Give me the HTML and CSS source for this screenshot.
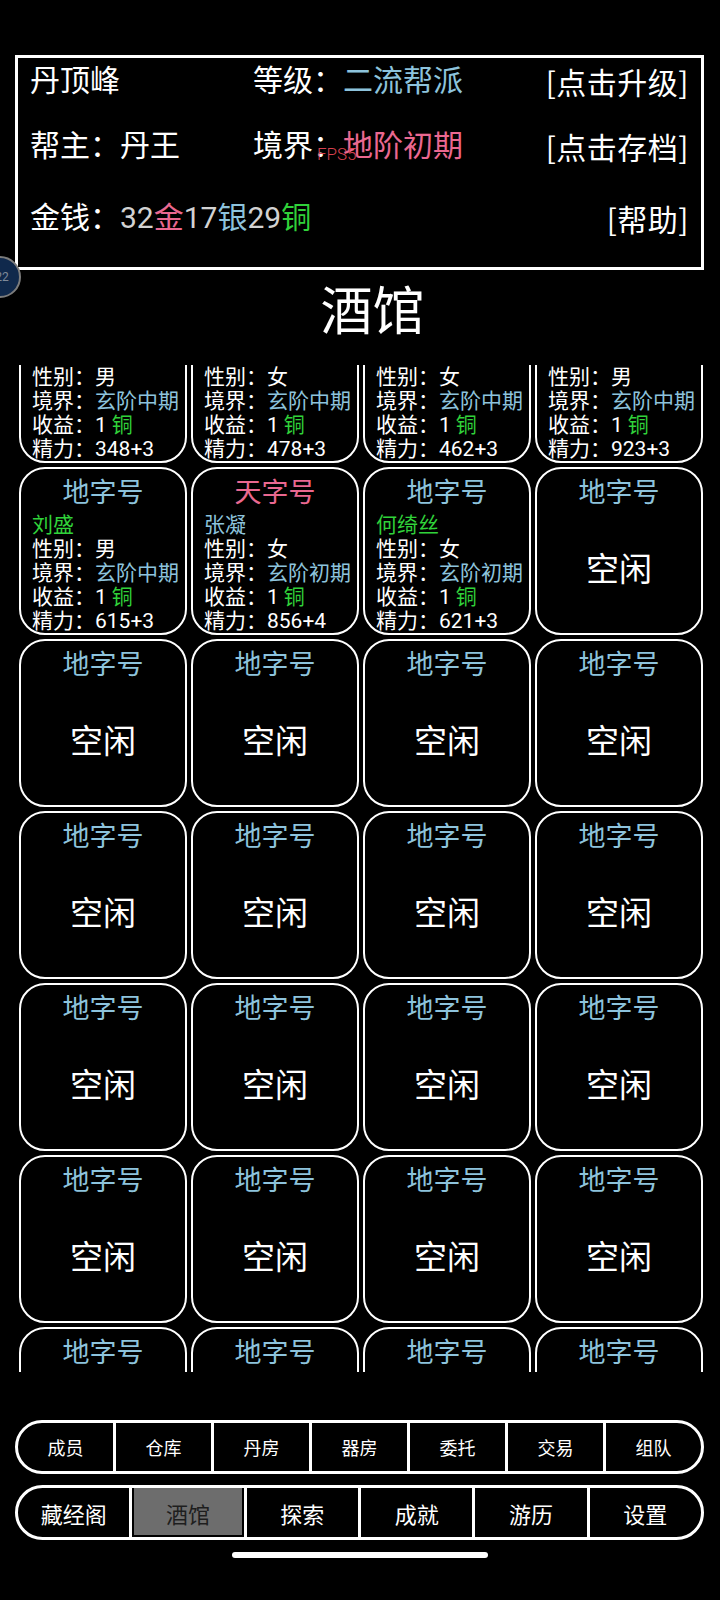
FILE: index.html
```html
<!DOCTYPE html>
<html lang="zh-CN">
<head>
    <meta charset="UTF-8">
    <meta name="viewport" content="width=device-width, initial-scale=1.0">
    <title>酒馆</title>
    <link rel="stylesheet" href="styles.css">
</head>
<body>
    <div class="screen">
        <!-- Sect info panel -->
        <div class="info">
            <div class="info-row">
                <span>丹顶峰</span>
                <span>等级：<span class="blue">二流帮派</span></span>
                <span class="link">[点击升级]</span>
            </div>
            <div class="info-row">
                <span>帮主：丹王</span>
                <span>境界：<span class="pink">地阶初期</span></span>
                <span class="link">[点击存档]</span>
            </div>
            <div class="info-row money">
                <span class="wide">金钱：<span class="num">32</span><span class="pink">金</span><span class="num">17</span><span class="blue">银</span><span class="num">29</span><span class="green">铜</span></span>
                <span class="link">[帮助]</span>
            </div>
            <div class="fps">FPS5</div>
        </div>

        <div class="float-ball">22</div>

        <h1 class="title">酒馆</h1>

        <!-- Rooms list (scrolled) -->
        <div class="rooms">
            <div class="room-grid">
                <div class="room">
                    <div class="room-title">地字号</div>
                    <div class="guest">
                        <div class="green">林风</div>
                        <div>性别：男</div>
                        <div>境界：<span class="blue">玄阶中期</span></div>
                        <div>收益：1<span class="coin">铜</span></div>
                        <div>精力：348+3</div>
                    </div>
                </div>
                <div class="room">
                    <div class="room-title">地字号</div>
                    <div class="guest">
                        <div class="green">苏青</div>
                        <div>性别：女</div>
                        <div>境界：<span class="blue">玄阶中期</span></div>
                        <div>收益：1<span class="coin">铜</span></div>
                        <div>精力：478+3</div>
                    </div>
                </div>
                <div class="room">
                    <div class="room-title">地字号</div>
                    <div class="guest">
                        <div class="green">柳月</div>
                        <div>性别：女</div>
                        <div>境界：<span class="blue">玄阶中期</span></div>
                        <div>收益：1<span class="coin">铜</span></div>
                        <div>精力：462+3</div>
                    </div>
                </div>
                <div class="room">
                    <div class="room-title">地字号</div>
                    <div class="guest">
                        <div class="green">王石</div>
                        <div>性别：男</div>
                        <div>境界：<span class="blue">玄阶中期</span></div>
                        <div>收益：1<span class="coin">铜</span></div>
                        <div>精力：923+3</div>
                    </div>
                </div>

                <div class="room">
                    <div class="room-title">地字号</div>
                    <div class="guest">
                        <div class="green">刘盛</div>
                        <div>性别：男</div>
                        <div>境界：<span class="blue">玄阶中期</span></div>
                        <div>收益：1<span class="coin">铜</span></div>
                        <div>精力：615+3</div>
                    </div>
                </div>
                <div class="room">
                    <div class="room-title pink">天字号</div>
                    <div class="guest">
                        <div class="blue">张凝</div>
                        <div>性别：女</div>
                        <div>境界：<span class="blue">玄阶初期</span></div>
                        <div>收益：1<span class="coin">铜</span></div>
                        <div>精力：856+4</div>
                    </div>
                </div>
                <div class="room">
                    <div class="room-title">地字号</div>
                    <div class="guest">
                        <div class="green">何绮丝</div>
                        <div>性别：女</div>
                        <div>境界：<span class="blue">玄阶初期</span></div>
                        <div>收益：1<span class="coin">铜</span></div>
                        <div>精力：621+3</div>
                    </div>
                </div>
                <div class="room">
                    <div class="room-title">地字号</div>
                    <div class="room-empty">空闲</div>
                </div>

                <div class="room"><div class="room-title">地字号</div><div class="room-empty">空闲</div></div>
                <div class="room"><div class="room-title">地字号</div><div class="room-empty">空闲</div></div>
                <div class="room"><div class="room-title">地字号</div><div class="room-empty">空闲</div></div>
                <div class="room"><div class="room-title">地字号</div><div class="room-empty">空闲</div></div>

                <div class="room"><div class="room-title">地字号</div><div class="room-empty">空闲</div></div>
                <div class="room"><div class="room-title">地字号</div><div class="room-empty">空闲</div></div>
                <div class="room"><div class="room-title">地字号</div><div class="room-empty">空闲</div></div>
                <div class="room"><div class="room-title">地字号</div><div class="room-empty">空闲</div></div>

                <div class="room"><div class="room-title">地字号</div><div class="room-empty">空闲</div></div>
                <div class="room"><div class="room-title">地字号</div><div class="room-empty">空闲</div></div>
                <div class="room"><div class="room-title">地字号</div><div class="room-empty">空闲</div></div>
                <div class="room"><div class="room-title">地字号</div><div class="room-empty">空闲</div></div>

                <div class="room"><div class="room-title">地字号</div><div class="room-empty">空闲</div></div>
                <div class="room"><div class="room-title">地字号</div><div class="room-empty">空闲</div></div>
                <div class="room"><div class="room-title">地字号</div><div class="room-empty">空闲</div></div>
                <div class="room"><div class="room-title">地字号</div><div class="room-empty">空闲</div></div>

                <div class="room"><div class="room-title">地字号</div><div class="room-empty">空闲</div></div>
                <div class="room"><div class="room-title">地字号</div><div class="room-empty">空闲</div></div>
                <div class="room"><div class="room-title">地字号</div><div class="room-empty">空闲</div></div>
                <div class="room"><div class="room-title">地字号</div><div class="room-empty">空闲</div></div>
            </div>
        </div>

        <!-- Bottom menus -->
        <div class="tabs small">
            <div class="tab">成员</div>
            <div class="tab">仓库</div>
            <div class="tab">丹房</div>
            <div class="tab">器房</div>
            <div class="tab">委托</div>
            <div class="tab">交易</div>
            <div class="tab">组队</div>
        </div>
        <div class="tabs big">
            <div class="tab">藏经阁</div>
            <div class="tab active">酒馆</div>
            <div class="tab">探索</div>
            <div class="tab">成就</div>
            <div class="tab">游历</div>
            <div class="tab">设置</div>
        </div>

        <div class="home-bar"></div>
    </div>
</body>
</html>
```

FILE: styles.css
```css
* {
    box-sizing: border-box;
}
body {
    margin: 0;
    background-color: #000;
    color: #fff;
    font-family: Roboto, "Noto Sans CJK SC", sans-serif;
    overflow: hidden;
}
.screen {
    position: relative;
    width: 720px;
    height: 1600px;
    padding-top: 55px;
}

/* colours used in text */
.blue {
    color: #8dc3dc;
}
.pink {
    color: #ea6890;
}
.green,
.coin {
    color: #30d23a;
}
.coin {
    margin-left: 5px;
}
.num {
    color: #d2d2d2;
}

/* info panel */
.info {
    position: relative;
    height: 215px;
    margin: 0 16px 0 15px;
    padding: 3px 12px 0;
    border: 3px solid #fff;
    font-size: 30px;
}
.info-row {
    display: grid;
    grid-template-columns: 223px 1fr auto;
    line-height: 40px;
    white-space: nowrap;
}
.info-row + .info-row {
    margin-top: 25px;
}
.info-row.money {
    margin-top: 32px;
}
.info-row .wide {
    grid-column: 1 / 3;
}
.info-row .link {
    font-family: "Noto Sans CJK SC", sans-serif;
    letter-spacing: 0.5px;
}
.fps {
    position: absolute;
    left: 299px;
    top: 88px;
    font-size: 17px;
    font-weight: 300;
    line-height: 16px;
    color: #d8404f;
}

.float-ball {
    position: absolute;
    left: -21px;
    top: 256px;
    width: 42px;
    height: 42px;
    padding-left: 4px;
    border: 2px solid #7c7c7c;
    border-radius: 50%;
    background-color: #10294c;
    color: #7f8a99;
    font-size: 12px;
    line-height: 38px;
    text-align: center;
}

.title {
    margin: 13px 0 22px;
    padding-left: 25px;
    font-size: 52px;
    font-weight: normal;
    line-height: 60px;
    text-align: center;
}

/* rooms */
.rooms {
    height: 1007px;
    overflow: hidden;
}
.room-grid {
    display: grid;
    grid-template-columns: repeat(4, 1fr);
    gap: 4px;
    margin-top: -70px;
    padding: 0 19px;
}
.room {
    display: flex;
    flex-direction: column;
    aspect-ratio: 1;
    padding-top: 6px;
    border: 2px solid #fff;
    border-radius: 26px;
}
.room-title {
    margin-bottom: 2px;
    font-size: 27px;
    line-height: 36px;
    text-align: center;
    color: #8dc3dc;
}
.room-title.pink {
    color: #ea6890;
}
.guest {
    padding-left: 11px;
    font-size: 21px;
    line-height: 24px;
    white-space: nowrap;
}
.room-empty {
    flex: 1;
    display: flex;
    align-items: center;
    justify-content: center;
    padding-bottom: 12px;
    font-size: 33px;
}

/* bottom tabs */
.tabs {
    display: flex;
    margin: 0 16px 0 15px;
    border: 3px solid #fff;
    border-radius: 28px;
    overflow: hidden;
}
.tabs.small {
    height: 54px;
    margin-top: 48px;
    font-size: 18px;
}
.tabs.big {
    height: 55px;
    margin-top: 11px;
    font-size: 22px;
}
.tab {
    flex: 1;
    display: flex;
    align-items: center;
    justify-content: center;
}
.tab + .tab {
    border-left: 3px solid #fff;
}
.tab.active {
    background-color: #6d6d6d;
    box-shadow: inset 2px 0 0 #000, inset -2px 0 0 #000, inset 0 -2px 0 #000;
    color: #1e1e1e;
}

.home-bar {
    width: 256px;
    height: 6px;
    margin: 12px auto 0;
    border-radius: 3px;
    background-color: #fff;
}
```
